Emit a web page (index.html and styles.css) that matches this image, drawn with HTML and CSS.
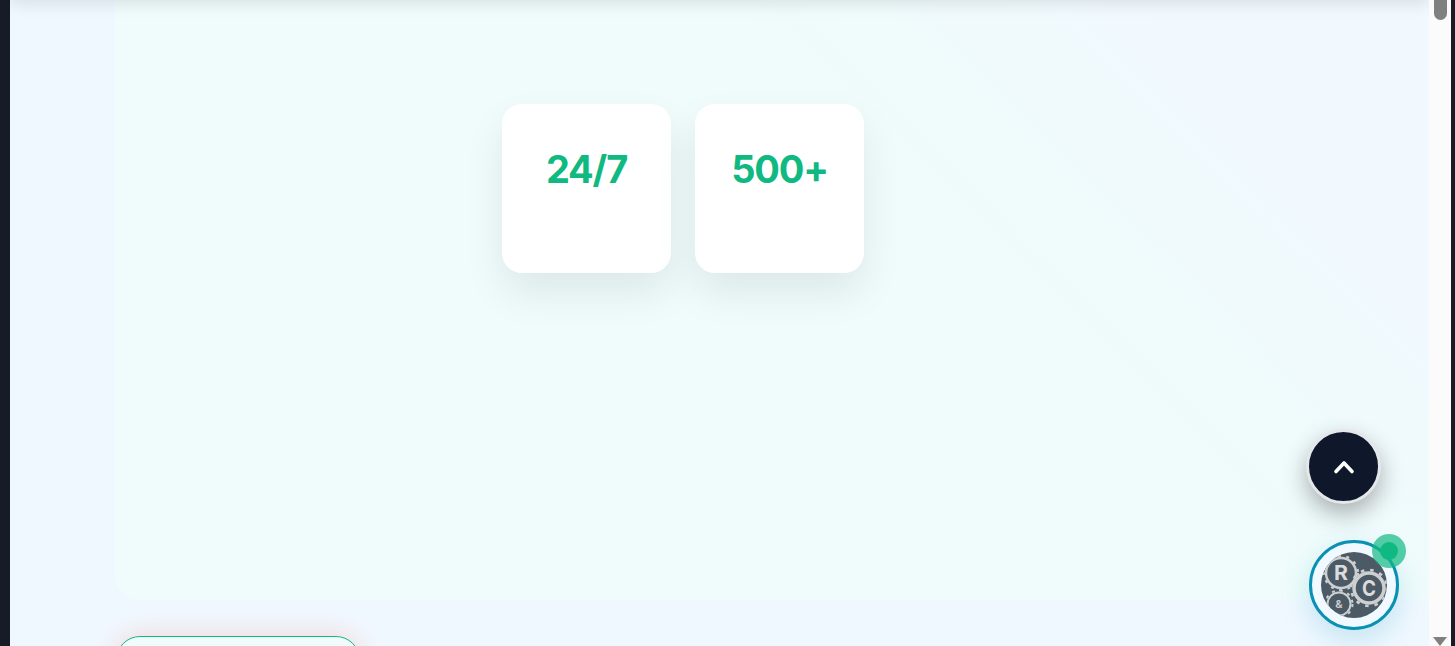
FILE: index.html
```html
<!DOCTYPE html>
<html lang="en">
<head>
<meta charset="utf-8">
<title>Stats</title>
<link rel="stylesheet" href="styles.css">
</head>
<body>
<div class="shell">
  <div class="edge edge-left"></div>
  <main class="main">
    <div class="header-shadow"></div>
    <section class="panel">
      <div class="stats">
        <div class="stat"><div class="stat-value">24/7</div></div>
        <div class="stat"><div class="stat-value">500+</div></div>
      </div>
    </section>
    <a class="cta"></a>
    <button class="to-top" aria-label="Back to top">
      <svg class="to-top-icon" viewBox="0 0 24 24" width="24" height="24" fill="none" stroke="#fff" stroke-width="3.6" stroke-linecap="round" stroke-linejoin="round"><path d="M4 16.5l8-8.5 8 8.5"/></svg>
    </button>
    <button class="chat" aria-label="Chat">
      <svg class="logo" viewBox="0 0 66 66" width="66" height="66">
        <defs><clipPath id="disc"><circle cx="33" cy="33" r="33"/></clipPath></defs>
        <circle cx="33" cy="33" r="33" fill="#4b5a65"/>
        <g fill="none" stroke="#cdd0d2" clip-path="url(#disc)">
          <circle cx="18" cy="52" r="11.5" stroke-width="2"/>
          <circle cx="18" cy="52" r="13.5" stroke-width="2" stroke-dasharray="3 5"/>
          <circle cx="20" cy="21" r="15" stroke-width="2.5"/>
          <circle cx="20" cy="21" r="17" stroke-width="2.2" stroke-dasharray="3 5.5"/>
          <circle cx="48" cy="36" r="15" stroke-width="3.5"/>
          <circle cx="48" cy="36" r="18" stroke-width="2.6" stroke-dasharray="3.5 6"/>
        </g>
        <text class="logo-r" x="20" y="28" text-anchor="middle" textLength="14" lengthAdjust="spacingAndGlyphs">R</text>
        <text class="logo-c" x="48" y="44" text-anchor="middle" textLength="14" lengthAdjust="spacingAndGlyphs">C</text>
        <text class="logo-amp" x="18" y="56" text-anchor="middle">&amp;</text>
      </svg>
      <span class="chat-dot"></span>
    </button>
  </main>
  <div class="scrollbar">
    <div class="scroll-thumb"></div>
    <div class="scroll-arrow"></div>
  </div>
  <div class="edge edge-right"></div>
</div>
</body>
</html>
```
FILE: styles.css
```css
* { box-sizing: border-box; }
html, body { margin: 0; height: 100%; overflow: hidden; }
body { font-family: Inter, "Liberation Sans", sans-serif; background: #161b26; }
.shell { display: flex; height: 646px; }
.edge { flex: none; background: #161b26; }
.edge-left { width: 10px; }
.edge-right { width: 4px; }
.main {
  flex: 1;
  min-width: 0;
  position: relative;
  overflow: hidden;
  background: #f0f8ff;
  padding-left: 105px;
  display: flex;
  flex-direction: column;
}
.header-shadow {
  position: absolute;
  left: 0; right: 0; top: -20px;
  height: 20px;
  box-shadow: 0 4px 16px rgba(0, 0, 0, .1);
}
.panel {
  flex: none;
  height: 600px;
  border-radius: 0 0 0 24px;
  background: linear-gradient(45deg, #effcfb 0%, #effcfb 62%, #f1f9fe 85%);
  padding: 104px 0 0 387px;
}
.stats { display: flex; gap: 24px; }
.stat {
  width: 169px;
  height: 169px;
  border-radius: 20px;
  background: #fff;
  box-shadow: 0 20px 40px rgba(0, 0, 0, .08);
  padding-top: 40px;
  text-align: center;
}
.stat-value { font-size: 38px; font-weight: 700; letter-spacing: -1.2px; line-height: 50px; color: #10b981; }
.cta {
  flex: none;
  display: block;
  width: 244px;
  height: 60px;
  margin: 36px 0 0 1px;
  border: 1.5px solid #10b981;
  border-radius: 24px;
  background: #effcfb;
  box-shadow: 0 -2px 26px rgba(240, 110, 80, .22);
}
.to-top {
  position: absolute;
  left: 1296px; top: 429px;
  width: 75px; height: 75px;
  padding: 0;
  border: 3px solid #e5e7eb;
  border-radius: 50%;
  background: #0f172a;
  box-shadow: 0 10px 25px rgba(0, 0, 0, .3);
  display: flex;
  align-items: center;
  justify-content: center;
}
.chat {
  position: absolute;
  left: 1299px; top: 540px;
  width: 90px; height: 90px;
  padding: 0;
  border: 3px solid #0891b2;
  border-radius: 50%;
  background: #f0f9ff;
  box-shadow: 0 10px 30px rgba(8, 145, 178, .2);
  display: flex;
  align-items: center;
  justify-content: center;
}
.logo-r { font: 700 20px Inter, "Liberation Sans", sans-serif; fill: #dadcde; }
.logo-c { font: 700 22px Inter, "Liberation Sans", sans-serif; fill: #dadcde; }
.logo-amp { font: 600 11px Inter, "Liberation Sans", sans-serif; fill: #cdd0d2; }
.chat-dot {
  position: absolute;
  left: 68px; top: -1px;
  width: 18px; height: 18px;
  margin: 0;
  border-radius: 50%;
  background: #10b981;
  box-shadow: 0 0 0 8px rgba(16, 185, 129, .7);
}
.scrollbar {
  flex: none;
  width: 22px;
  position: relative;
  background: #fbfbfb;
}
.scroll-thumb {
  position: absolute;
  left: 5px; top: -10px;
  width: 13px; height: 30px;
  border-radius: 7px;
  background: #808080;
}
.scroll-arrow {
  position: absolute;
  left: 4px; bottom: 0;
  width: 0; height: 0;
  border-left: 7.5px solid transparent;
  border-right: 7.5px solid transparent;
  border-top: 9px solid #808080;
}
```
